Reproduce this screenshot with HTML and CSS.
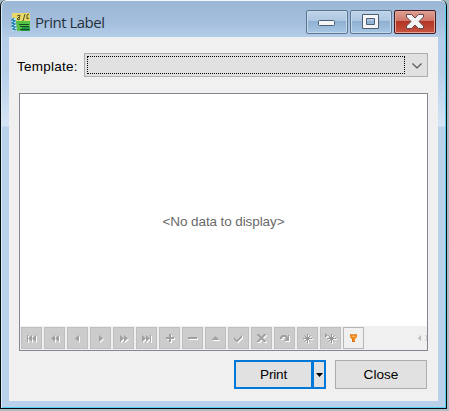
FILE: index.html
```
<!DOCTYPE html>
<html lang="en">
<head>
<meta charset="utf-8">
<title>Print Label</title>
<link rel="stylesheet" href="styles.css">
</head>
<body>
<div class="window">
  <header class="titlebar">
    <svg class="app-icon" width="20" height="20" viewBox="0 0 20 20">
      <path d="M1 1h18v9H1z" fill="#ead869"/><path d="M5 9h14v10H6z" fill="#55c246"/><path d="M11 15h8v4h-9z" fill="#239b45"/>
      <path d="M1 6h4v13H1z" fill="#b7e4f2"/>
      <path d="M3 6l-2 2 3 1-3 2 3 1-3 2 3 1-2 2 3 1" fill="none" stroke="#1676a8" stroke-width="1.2"/>
      <path d="M6 4l3-1-1 5-2-1 2-2M12 9l2-7M18 2l-2 1v4l2-1" fill="none" stroke="#4b5128"/>
      <path d="M8 12.500h10M9 14.500h9M9 17.500h9" stroke="#174e21" stroke-width="1"/>
    </svg>
    <h1 class="title">Print Label</h1>
    <div class="captions">
      <button class="caption" aria-label="Minimize"><svg width="40" height="22"><rect x="11.500" y="9.500" width="16" height="5" rx="1" fill="#f6f6f6" stroke="#4d5f76"/></svg></button>
      <button class="caption" aria-label="Maximize"><svg width="40" height="22"><path d="M11.500 3.500h16v14h-16zM15.500 7.500v6h8v-6z" fill="#f6f6f6" fill-rule="evenodd" stroke="#4d5f76"/></svg></button>
      <button class="caption caption-close" aria-label="Close window"><svg width="40" height="22"><path d="M11.500 3.500h5l3.500 3.500 3.500-3.500h5v2.500l-4.500 4.500 4.500 4.500v2.500h-5l-3.500-3.500-3.500 3.500h-5v-2.500l4.500-4.500-4.500-4.500z" fill="#f4f3f3" stroke="#63474f"/></svg></button>
    </div>
  </header>
  <main class="client">
    <div class="field">
      <span class="label">Template:</span>
      <div class="combo"><div class="combo-focus"></div><svg class="chevron" width="22" height="22"><path d="M7.500 8.500l4.500 4.500 4.500-4.500" fill="none" stroke="#555" stroke-width="1.2"/></svg></div>
    </div>
    <section class="grid">
      <div class="empty"><span>&lt;No data to display&gt;</span></div>
      <div class="navigator">
        <button class="nav"><svg viewBox="0 0 19 20"><path d="M5 7h1v7H5zM10 7v7l-4-3.500zM14 7v7l-4-3.500z"/></svg></button>
        <button class="nav"><svg viewBox="0 0 19 20"><path d="M10 7v7l-4-3.500zM14 7v7l-4-3.500z"/></svg></button>
        <button class="nav"><svg viewBox="0 0 19 20"><path d="M11 7v7l-4-3.500z"/></svg></button>
        <button class="nav"><svg viewBox="0 0 19 20"><path d="M8 7v7l4-3.500z"/></svg></button>
        <button class="nav"><svg viewBox="0 0 19 20"><path d="M6 7v7l4-3.500zM10 7v7l4-3.500z"/></svg></button>
        <button class="nav"><svg viewBox="0 0 19 20"><path d="M5 7v7l4-3.500zM9 7v7l4-3.500zM13 7h1v7h-1z"/></svg></button>
        <button class="nav"><svg viewBox="0 0 19 20"><path d="M9 6h2v3h3v2h-3v3H9v-3H6V9h3z"/></svg></button>
        <button class="nav"><svg viewBox="0 0 19 20"><path d="M5 9h9v2H5z"/></svg></button>
        <button class="nav"><svg viewBox="0 0 19 20"><path d="M5.500 12l4-4 4 4z"/></svg></button>
        <button class="nav"><svg viewBox="0 0 19 20"><path d="M5 9l3 3 5-5v2.500l-5 5-3-3z"/></svg></button>
        <button class="nav"><svg viewBox="0 0 19 20"><path d="M5 6h2l2.500 2.500L12 6h2v1l-3 3 3 3v1h-2l-2.500-2.500L7 14H5v-1l3-3-3-3z"/></svg></button>
        <button class="nav"><svg viewBox="0 0 19 20"><path d="M5 11V9l2-2h4l2 2V7h1v6H9l2-2-1-2H8l-1 2z"/></svg></button>
        <button class="nav"><svg viewBox="0 0 19 20"><path class="star" d="M9.500 6v9M5 10.500h9M6.500 7.500l6 6M12.500 7.500l-6 6"/></svg></button>
        <button class="nav"><svg viewBox="0 0 19 20"><path d="M4 5v5l3-2.500z"/><path class="star" d="M10.500 6v9M6 10.500h9M7.500 7.500l6 6M13.500 7.500l-6 6"/></svg></button>
        <button class="nav nav-filter"><svg viewBox="0 0 19 20"><path d="M6 6.500h7v2.500l-2 2v3H8v-3L6 9z" fill="#f08a1c"/><path d="M7.500 8h4" stroke="#fde0b4"/><path d="M6 7h7M7 9.500l1.500 1.500v2.500h2" fill="none" stroke="#dc7010"/></svg></button>
        <svg class="scroll-tip" width="10" height="9"><path d="M4 2v6L1 5z" fill="#b9b9b9"/><path d="M8 2.500h1.500M8 7.500h1.500M9.500 3v4" fill="none" stroke="#cfcfcf"/></svg>
      </div>
    </section>
    <footer class="actions">
      <div class="split"><button class="print"><span>Print</span></button><button class="drop" aria-label="Print options"><svg width="7" height="4"><path d="M0 0h7L3.500 4z"/></svg></button></div>
      <button class="close"><span>Close</span></button>
    </footer>
  </main>
</div>
</body>
</html>
```
FILE: styles.css
```
* { box-sizing: border-box; }
body {
  margin: 0;
  width: 449px;
  height: 411px;
  overflow: hidden;
  background: linear-gradient(#a2bac4, #b0bdc6);
  font-family: "Liberation Sans", Arial, sans-serif;
  font-size: 13px;
  color: #000;
}
button { margin: 0; padding: 0; font: inherit; color: inherit; border-radius: 0; }
svg { display: block; flex: none; }
.window {
  width: 447px;
  height: 409px;
  padding: 1px 7px 6px 8px;
  border: 1px solid #050a0e;
  border-top: 0;
  border-radius: 6px 6px 0 0;
  background: linear-gradient(#9bb7d6 0, #a4bfdd 22px, #b4cde9 38px, #b7cfe9 70px, #d5e4f5 126px, #b9d1ea 127px, #b9d1ea 100%);
  box-shadow: inset 0 1px #f2f9fc, inset 1px 0 #d9edf8, inset -1px -1px #55d2ef;
}
.titlebar { height: 36px; display: flex; align-items: flex-start; padding: 0 3px 0 2px; }
.app-icon { margin-top: 11px; }
.title {
  margin: 11px 0 0 4px;
  font: 15px/20px "Open Sans", "Noto Sans", sans-serif;
  letter-spacing: -0.5px;
  color: #26323e;
}
.captions { display: flex; gap: 2px; margin: 9px 0 0 auto; }
.caption {
  width: 42px;
  height: 24px;
  border: 1px solid #5c7590;
  border-radius: 2px;
  background: linear-gradient(#bfd4e9 0, #adc6e0 45%, #8eafd0 46%, #a8c7e5 100%);
  box-shadow: inset 0 0 0 1px #c5d9ec;
}
.caption-close {
  border-color: #431a22;
  background: linear-gradient(#dda092 0, #cf7768 45%, #b53424 46%, #c65340 100%);
  box-shadow: inset 0 0 0 1px #dfa398;
}
.client { width: 429px; height: 364px; padding: 16px 10px 0; background: #f0f0f0; }
.field { display: flex; align-items: center; height: 24px; }
.label { width: 67px; margin: 2px 0 0 -2px; font-size: 13.5px; letter-spacing: 0.25px; white-space: nowrap; }
.combo { display: flex; flex: 1; height: 24px; padding: 2px 0 0 2px; border: 1px solid #adadad; background: #e1e1e1; }
.combo-focus { width: 318px; height: 18px; border: 1px dotted #000; }
.chevron { margin: -1px 0 0 0; }
.grid { display: flex; flex-direction: column; margin-top: 16px; height: 258px; border: 1px solid #828790; background: #fff; }
.empty { flex: 1; display: flex; align-items: center; justify-content: center; padding: 23px 0 0; color: #696969; font-size: 13.5px; letter-spacing: -0.1px; }
.navigator { height: 24px; display: flex; gap: 2px; padding: 1px 0 1px 1px; background: #f0f0f0; }
.nav { width: 21px; height: 22px; border: 1px solid #bfbfbf; background: #ccc; flex: none; }
.nav svg { width: 19px; height: 20px; fill: #a0a0a0; filter: drop-shadow(1px 1px 0 #fff); }
.nav .star { fill: none; stroke: #949494; }
.nav-filter { background: #f0f0f0; border-color: #b6b6b6; }
.nav-filter svg { filter: none; }
.scroll-tip { margin: 6px 0 0 auto; }
.actions { display: flex; justify-content: flex-end; gap: 9px; margin: 9px 1px 0 0; }
.split { display: flex; width: 92px; height: 29px; border: 2px solid #0078d7; background: #e1e1e1; }
.print { width: 75px; border: 0; background: #e1e1e1; }
.drop { display: flex; align-items: center; justify-content: center; width: 13px; border: 0; border-left: 3px solid #0078d7; background: #e1e1e1; }
.close { width: 92px; height: 29px; border: 1px solid #adadad; background: #e1e1e1; }
.print, .close { font-size: 13.6px; }
.print { letter-spacing: -0.2px; }
```
